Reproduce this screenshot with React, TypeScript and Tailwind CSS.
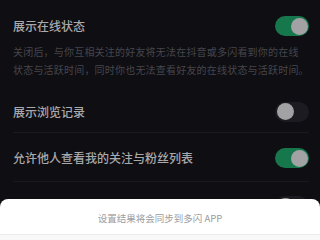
import React from "react";

const cjk = { fontFamily: '"Noto Sans CJK SC", "Noto Sans", sans-serif' };

function Toggle({ on }: { on: boolean }) {
  return (
    <div
      className={`flex h-[20px] w-[34px] shrink-0 items-center rounded-full px-[1.5px] ${
        on ? "justify-end bg-[#16774c]" : "justify-start bg-[#1b1b21]"
      }`}
    >
      <div className="h-[17px] w-[17px] rounded-full bg-[#a2a2a4]" />
    </div>
  );
}

export default function App() {
  return (
    <div className="relative h-[240px] w-[320px] overflow-hidden bg-[#0e0e13]" style={cjk}>
      <div className="pl-[13px] pr-[11px]">
        <div className="pt-[16px] pb-[12px]">
          <div className="flex h-[20px] items-center justify-between">
            <span className="text-[12px] font-medium text-[#a9a9ac]">展示在线状态</span>
            <Toggle on />
          </div>
          <p className="mt-[7px] whitespace-nowrap text-[10px] leading-[18px] tracking-[0.2px] text-[#46464c]">
            关闭后，与你互相关注的好友将无法在抖音或多闪看到你的在线
            <br />
            状态与活跃时间，同时你也无法查看好友的在线状态与活跃时间。
          </p>
        </div>

        <div className="flex h-[41px] items-center justify-between">
          <span className="text-[12px] font-medium text-[#a9a9ac]">展示浏览记录</span>
          <Toggle on={false} />
        </div>
        <div className="h-px bg-[#19191f]" />

        <div className="flex h-[48px] items-center justify-between pt-[2px]">
          <span className="text-[12px] font-medium text-[#a9a9ac]">允许他人查看我的关注与粉丝列表</span>
          <Toggle on />
        </div>
        <div className="h-px bg-[#19191f]" />

        <div className="flex h-[44px] items-center justify-between pt-[4px]">
          <span className="text-[12px] font-medium text-[#a9a9ac]">展示共同关注</span>
          <Toggle on={false} />
        </div>
      </div>

      <div className="absolute inset-x-0 top-[199px] bottom-0 flex flex-col rounded-t-[8px] bg-white">
        <div className="flex h-[35px] items-center justify-center pt-[4px] text-[9.5px] text-[#9c9c9f]">
          设置结果将会同步到多闪 APP
        </div>
        <div className="flex-1 border-t border-[#ececec] bg-[#f8f8f8]" />
      </div>
    </div>
  );
}
